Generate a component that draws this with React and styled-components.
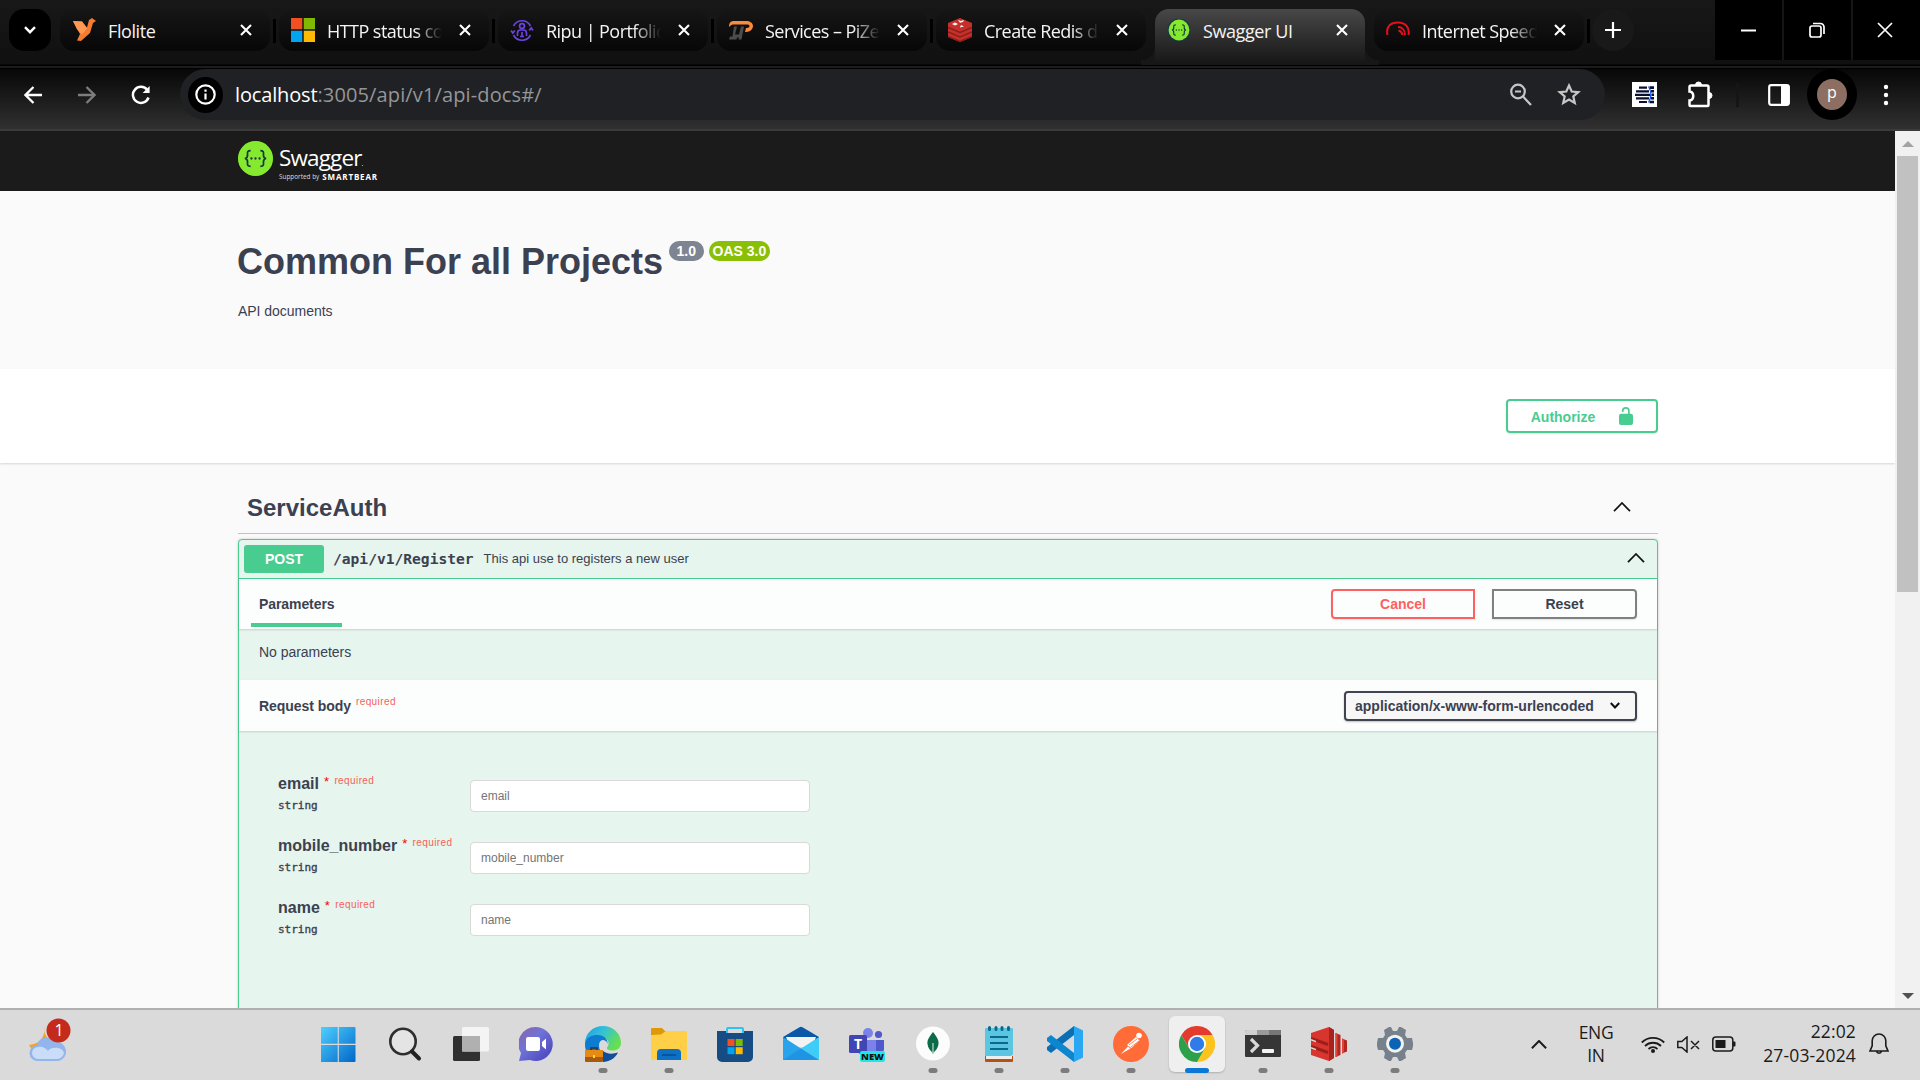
import React from "react";
import styled, { createGlobalStyle, css } from "styled-components";

const GlobalStyle = createGlobalStyle`
  *, *::before, *::after { box-sizing: border-box; }
  html, body { margin: 0; padding: 0; overflow: hidden; }
  body { font-family: "Liberation Sans", Arial, sans-serif; color: #3b4151; }
  svg { display: block; flex: none; }
`;

const UI = `"Open Sans", "Noto Sans", sans-serif`;
const MONO = `"DejaVu Sans Mono", monospace`;

const Screen = styled.div`
  width: 1920px;
  height: 1080px;
  display: flex;
  flex-direction: column;
  overflow: hidden;
  background: #fafafa;
`;

/* ---------- browser chrome ---------- */

const TabStrip = styled.div`
  height: 69px;
  flex: none;
  display: flex;
  align-items: flex-start;
  padding-left: 9px;
  background: linear-gradient(#181818, #101010 64px, #000 65px, #000 66px, #1c1c1c 66px, #1c1c1c 68px, #000 68px);
`;

const TabSearch = styled.button`
  width: 42px;
  height: 42px;
  margin: 9px 9px 0 0;
  padding: 0;
  border: 0;
  border-radius: 15px;
  background: #000;
  display: grid;
  place-items: center;
`;

const Tab = styled.div`
  position: relative;
  width: 210px;
  height: 42px;
  margin-top: 9px;
  padding: 0 18px 0 12px;
  border-radius: 14px;
  display: flex;
  align-items: center;
  color: #f4f4f4;
  background: linear-gradient(#161616, #070707);
  ${(p) =>
    p.$active &&
    css`
      height: 56px;
      padding: 0 17px 14px 12px;
      border-radius: 14px 14px 0 0;
      background: linear-gradient(#484848, #151515);
      &::before, &::after {
        content: "";
        position: absolute;
        bottom: 0;
        width: 14px;
        height: 19px;
      }
      &::before {
        left: -14px;
        background: radial-gradient(circle at 0 0, transparent 14px, #171717 14.5px);
      }
      &::after {
        right: -14px;
        background: radial-gradient(circle at 100% 0, transparent 14px, #171717 14.5px);
      }
    `}
`;

const TabTitle = styled.span`
  flex: 1;
  margin: 2px 17px 0 12px;
  overflow: hidden;
  white-space: nowrap;
  font: 18px/24px ${UI};
  letter-spacing: -0.4px;
  ${(p) => p.$fade && css`
    letter-spacing: -0.55px;
    mask-image: linear-gradient(90deg, #000 88px, transparent 115px);
  `}
`;

const TabDivider = styled.div`
  width: 3px;
  height: 24px;
  margin: 19px 3px 0;
  background: ${(p) => (p.$hidden ? "transparent" : "#000")};
`;

const NewTab = styled(TabSearch)`
  margin-left: -1px;
  margin-right: 0;
  border-radius: 50%;
  background: #191919;
`;

const WindowButtons = styled.div`
  margin-left: auto;
  display: flex;
  gap: 2px;
  background: #151515;
`;

const WindowButton = styled.div`
  width: 67px;
  height: 60px;
  padding-right: ${(p) => p.$shift || 0}px;
  background: #000;
  display: grid;
  place-items: center;
`;

const Toolbar = styled.div`
  height: 62px;
  flex: none;
  display: flex;
  align-items: flex-start;
  border-bottom: 2px solid #3b3b3b;
  background: linear-gradient(#070707, #303030);
`;

const ToolIcon = styled.div`
  width: ${(p) => p.$w}px;
  height: 51px;
  display: grid;
  place-items: center;
  flex: none;
`;

const Omnibox = styled.div`
  width: 1425px;
  height: 51px;
  border-radius: 26px;
  background: #202124;
  display: flex;
  align-items: center;
  padding: 0 24px 0 8px;
`;

const SiteInfo = styled.div`
  width: 35px;
  height: 36px;
  border-radius: 50%;
  background: #000;
  display: grid;
  place-items: center;
`;

const Url = styled.div`
  flex: 1;
  margin-left: 12px;
  padding-top: 1px;
  font: 20px/28px ${UI};
  letter-spacing: 0.13px;
  color: #949698;
  b { font-weight: 400; letter-spacing: -0.15px; color: #fff; }
`;

const OmniIcons = styled.div`
  display: flex;
  gap: 25px;
`;

const ToolDivider = styled.div`
  width: 3px;
  height: 24px;
  margin: 14px 24px 0 20px;
  background: #151515;
`;

const Avatar = styled.div`
  width: 50px;
  height: 51px;
  margin-left: 12px;
  border: 10px solid #000;
  border-radius: 50%;
  background: #8d6e63;
  color: #fff;
  text-align: center;
  font: 16px/27px ${UI};
`;

/* ---------- page ---------- */

const Viewport = styled.div`
  flex: 1;
  min-height: 0;
  display: flex;
`;

const Page = styled.main`
  width: 1895px;
  overflow: hidden;
`;

const Scrollbar = styled.div`
  width: 25px;
  padding: 10px 2px 9px;
  display: flex;
  flex-direction: column;
  align-items: center;
  background: #f1f1f1;
`;

const Thumb = styled.div`
  width: 21px;
  height: 436px;
  margin: 9px 0 auto;
  background: #c1c1c1;
`;

const Container = styled.div`
  width: 1420px;
  margin-left: 238px;
`;

const TopBar = styled.header`
  height: 60px;
  background: #1b1b1b;
`;

const Logo = styled(Container)`
  display: flex;
  padding-top: 10px;
  gap: 6px;
  color: #fff;
`;

const LogoText = styled.div`
  padding-top: 3px;
`;

const LogoName = styled.div`
  height: 27px;
  font: 22.5px/27px ${UI};
  letter-spacing: -0.85px;
  small { font-size: 7px; }
`;

const LogoBy = styled.div`
  height: 9px;
  margin-top: 1px;
  display: flex;
  align-items: center;
  gap: 3px;
  white-space: nowrap;
  font: 6.4px/9px ${UI};
  color: #ddd;
  b { font-size: 8px; line-height: 9px; letter-spacing: 0.85px; color: #fff; }
`;

const Info = styled(Container)`
  height: 178px;
  padding-top: 48px;
`;

const TitleRow = styled.div`
  height: 44px;
  display: flex;
  gap: 5px;
`;

const Title = styled.h1`
  margin: 1px 1px 0 -1px;
  font-size: 36px;
  line-height: 44px;
`;

const Badge = styled.span`
  height: 20px;
  margin-top: 2px;
  padding: 0 ${(p) => p.$pad}px;
  border-radius: 10px;
  background: ${(p) => p.$bg};
  color: #fff;
  font-size: 14px;
  font-weight: 700;
  line-height: 20px;
`;

const Text = styled.p`
  margin: ${(p) => p.$margin || 0};
  font-size: 14px;
  line-height: 20px;
  letter-spacing: -0.03px;
`;

const SchemeBar = styled.section`
  height: 94px;
  padding: 30px 237px 0 0;
  display: flex;
  justify-content: flex-end;
  background: #fff;
  box-shadow: 0 1px 2px rgba(0, 0, 0, 0.15);
`;

const Button = styled.button`
  width: ${(p) => p.$w}px;
  height: ${(p) => p.$h || 30}px;
  padding: ${(p) => p.$top || 0}px 0 0;
  border: 2px solid ${(p) => p.$line};
  border-radius: ${(p) => p.$radius || "4px"};
  background: transparent;
  color: ${(p) => p.$color || p.$line};
  box-shadow: 0 1px 2px rgba(0, 0, 0, 0.1);
  font: 700 14px/20px "Liberation Sans", Arial, sans-serif;
  display: flex;
  align-items: center;
  justify-content: center;
  gap: ${(p) => p.$gap || 0}px;
  svg { margin-top: -${(p) => p.$top || 0}px; }
`;

const TagHeader = styled(Container)`
  height: 71px;
  padding: 19px 27px 0 9px;
  display: flex;
  align-items: center;
  justify-content: space-between;
  border-bottom: 1px solid rgba(59, 65, 81, 0.3);
  h3 { margin: 0; font-size: 24px; line-height: 30px; }
  svg { margin-top: -2px; }
`;

const OpBlock = styled(Container)`
  height: 500px;
  margin-top: 5px;
  border: 1px solid #49cc90;
  border-radius: 4px;
  background: #e6f5ed;
  box-shadow: 0 0 3px rgba(0, 0, 0, 0.19);
`;

const OpSummary = styled.div`
  height: 39px;
  padding: 0 12px 0 5px;
  display: flex;
  align-items: center;
  border-bottom: 1px solid #49cc90;
  svg { margin-top: -2px; }
`;

const Method = styled.span`
  width: 80px;
  height: 28px;
  border-radius: 3px;
  background: #49cc90;
  color: #fff;
  font-size: 14px;
  font-weight: 700;
  line-height: 28px;
  text-align: center;
`;

const Path = styled.span`
  margin-left: 9px;
  font: 700 14.6px/24px ${MONO};
`;

const Description = styled.span`
  flex: 1;
  margin-left: 10px;
  font-size: 13px;
  line-height: 20px;
`;

const SectionHeader = styled.div`
  height: ${(p) => p.$h}px;
  padding: 0 20px 0 ${(p) => p.$left}px;
  display: flex;
  align-items: center;
  justify-content: space-between;
  background: #fbfefc;
  box-shadow: 0 1px 2px rgba(0, 0, 0, 0.15);
`;

const TabLabel = styled.h4`
  align-self: stretch;
  height: 48px;
  margin: 0;
  padding: 0 8px;
  border-bottom: 4px solid #49cc90;
  font-size: 14px;
  line-height: 51px;
  letter-spacing: -0.08px;
`;

const SectionLabel = styled.h4`
  display: flex;
  margin: 0;
  font-size: 14px;
  line-height: 20px;
  letter-spacing: -0.05px;
`;

const ButtonPair = styled.div`
  display: flex;
  gap: 17px;
`;

const NoParams = styled.div`
  height: 51px;
  padding: 13px 20px;
`;

const Required = styled.span`
  margin: ${(p) => p.$margin};
  color: #f75f5c;
  font: 400 10px/12px "Liberation Sans", Arial, sans-serif;
  letter-spacing: 0.4px;
`;

const Star = styled(Required)`
  color: #f00;
  font-size: 13px;
`;

const Select = styled.div`
  width: 293px;
  height: 30px;
  padding: 0 15px 0 9px;
  display: flex;
  align-items: center;
  justify-content: space-between;
  border: 2px solid #41444e;
  border-radius: 4px;
  background: #f7f7f7;
  box-shadow: 0 1px 2px rgba(0, 0, 0, 0.25);
  font-size: 14px;
  font-weight: 700;
`;

const Form = styled.div`
  display: flex;
  flex-direction: column;
  gap: 20px;
  padding: 42px 39px;
`;

const Field = styled.label`
  height: 42px;
  display: grid;
  grid-template-columns: 192px 340px;
`;

const FieldName = styled.div`
  display: flex;
  font-size: 16px;
  font-weight: 700;
  line-height: 22px;
`;

const FieldType = styled.div`
  font: 400 11px/14px ${MONO};
  -webkit-text-stroke: 0.35px #3b4151;
  margin-top: 4px;
`;

const Input = styled.input`
  width: 340px;
  height: 32px;
  margin-top: 7px;
  padding: 0 10px;
  border: 1px solid #d9d9d9;
  border-radius: 4px;
  background: #fff;
  font: 12px "Liberation Sans", Arial, sans-serif;
  &::placeholder { color: #757575; opacity: 1; }
`;

/* ---------- taskbar ---------- */

const Taskbar = styled.footer`
  height: 72px;
  flex: none;
  display: flex;
  border-top: 2px solid #b0b0b0;
  background: #dadada;
  color: #1b1b1b;
  font-family: ${UI};
`;

const Weather = styled.div`
  width: 306px;
  padding: 6px 0 0 28px;
`;

const Apps = styled.div`
  width: 1224px;
  display: flex;
`;

const AppTile = styled.div`
  position: relative;
  width: 56px;
  height: 56px;
  margin: 6px 5px 0;
  display: grid;
  place-items: center;
  border-radius: 6px;
  ${(p) => p.$active && css`background: #efefef; box-shadow: 0 1px 2px rgba(0, 0, 0, 0.2);`}
`;

const Indicator = styled.i`
  position: absolute;
  bottom: -1px;
  left: 50%;
  width: ${(p) => (p.$active ? 24 : 9)}px;
  height: 5px;
  border-radius: 3px;
  transform: translateX(-50%);
  background: ${(p) => (p.$active ? "#0a78d4" : "#7c7c7c")};
`;

const Tray = styled.div`
  flex: 1;
  height: 68px;
  padding-left: 1px;
  display: flex;
  align-items: center;
`;

const Lang = styled.div`
  width: 40px;
  margin: 0 25px 0 29px;
  text-align: center;
  font-size: 17.5px;
  line-height: 23px;
  letter-spacing: -0.3px;
`;

const Status = styled.div`
  display: flex;
  align-items: center;
  gap: 12px;
`;

const Clock = styled.div`
  width: 104px;
  margin: -3px 13px 0 16px;
  text-align: right;
  font-size: 17.5px;
  line-height: 24px;
  letter-spacing: 0.15px;
`;

/* ---------- icons ---------- */

const Stroke = ({ w, h, vb, d, color = "#fff", sw = 2, children, ...rest }) => (
  <svg width={w} height={h} viewBox={vb || `0 0 ${w} ${h}`} fill="none" stroke={color} strokeWidth={sw} {...rest}>
    {d && <path d={d} />}
    {children}
  </svg>
);

const CloseX = () => <Stroke w={12} h={12} sw={2.1} d="M1 1l10 10M11 1L1 11" />;
const ChevronUp = ({ w = 18, h = 10, sw = 1.7, color = "#111" }) => (
  <Stroke w={w} h={h} vb="0 0 18 10" sw={sw} color={color} d="M1 9.2L9 1l8 8.2" />
);

const Braces = ({ size, ring }) => (
  <svg width={size} height={size} viewBox="0 0 36 36">
    <circle cx="18" cy="18" r="18" fill={ring || "#85ea2d"} />
    <circle cx="18" cy="18" r={ring ? 16.3 : 17.6} fill="#85ea2d" />
    <path
      d="M13 10c-3 0-3.4 1-3.2 3.6.2 2.7-.2 4.2-2.8 4.4 2.6.2 3 1.7 2.8 4.4-.2 2.6.2 3.6 3.2 3.6M23 10c3 0 3.4 1 3.2 3.6-.2 2.7.2 4.2 2.8 4.4-2.6.2-3 1.7-2.8 4.4.2 2.6-.2 3.6-3.2 3.6"
      fill="none"
      stroke="#173647"
      strokeWidth="1.8"
    />
    <g fill="#173647">
      <circle cx="13.8" cy="18" r="1.2" />
      <circle cx="18" cy="18" r="1.2" />
      <circle cx="22.2" cy="18" r="1.2" />
    </g>
  </svg>
);

const Fav = ({ children }) => <svg width="24" height="24" viewBox="0 0 24 24">{children}</svg>;

const favicons = {
  flolite: (
    <Fav>
      <path d="M1 3l9 .5 5 6 2-7.500L20 0l4 3-3 2-3 10-9 8-4-.5 3-6.500L5 11z" fill="#f47b30" />
      <path d="M1 3l9 .5 5 7-5 6L5 11z" fill="#ff9a55" />
    </Fav>
  ),
  microsoft: (
    <Fav>
      <path fill="#f25022" d="M0 0h11.300v11.300H0z" />
      <path fill="#7fba00" d="M12.700 0H24v11.300H12.700z" />
      <path fill="#00a4ef" d="M0 12.700h11.300V24H0z" />
      <path fill="#ffb900" d="M12.700 12.700H24V24H12.700z" />
    </Fav>
  ),
  ripu: (
    <Fav>
      <g fill="none" stroke="#6a43e0" strokeWidth="1.7">
        <path d="M3.500 8A9.500 9.500 0 0 1 20.500 8M3.500 17a9.500 9.500 0 0 0 17 0M1 12.500l1.800 2.500 2-2.500M19.200 12.500l2-2.500 1.800 2.500" />
        <circle cx="12" cy="8" r="2.4" />
        <path d="M7.500 18v-3a3 3 0 0 1 3-3h3a3 3 0 0 1 3 3v3M12 14v5M10 18.500h4" />
      </g>
    </Fav>
  ),
  pizeon: (
    <Fav>
      <path d="M0 9c0-4 1.500-6 5-6h12c4 0 7 2 7 5s-3 6-7 6h-1l1-4c2.500.2 3.500-.8 3.500-2S19 6.500 17.500 6.500H5C3 6.500 2 7 0 9z" fill="#fb8b3c" />
      <path d="M5 8.500h3l-2 8h4l2-8h3l-2.500 13h-3l.4-2H8l-.5 2H0l1-3h2.500z" fill="#4c4c4c" />
    </Fav>
  ),
  redis: (
    <Fav>
      <path d="M0 5l12-5 12 5v14l-12 5-12-5z" fill="#c6302b" />
      <path d="M0 9.500l12 5 12-5M0 14l12 5 12-5M0 18.500l12 5 12-5" stroke="#8b1f1b" strokeWidth="1.5" fill="none" />
      <path d="M10 2l3 1 3-1-1 2-3 .8zM13 7l3 1.500-4 1zM4 6l3-1.500L10 6 7 7.500z" fill="#fff" />
    </Fav>
  ),
  swagger: (
    <Fav>
      <g transform="translate(.5 .5)">
        <Braces size={23} ring="#173647" />
      </g>
    </Fav>
  ),
  speed: (
    <Fav>
      <g fill="none" stroke="#e5101c" strokeWidth="2">
        <path d="M1.500 17C-.5 8 5 4.500 12 4.500S24 9 22.500 17" />
        <path d="M12 9c4 0 7 3 7 8M12.500 12.500c2 .5 3.500 2 4 4.500" />
      </g>
    </Fav>
  ),
};

const tabs = [
  { icon: "flolite", title: "Flolite" },
  { icon: "microsoft", title: "HTTP status co", fade: true },
  { icon: "ripu", title: "Ripu | Portfolio", fade: true },
  { icon: "pizeon", title: "Services – PiZe", fade: true },
  { icon: "redis", title: "Create Redis d", fade: true },
  { icon: "swagger", title: "Swagger UI", active: true },
  { icon: "speed", title: "Internet Speed", fade: true },
];

const Icon36 = ({ children }) => <svg width="36" height="36" viewBox="0 0 36 36">{children}</svg>;

const apps = [
  {
    id: "start",
    art: (
      <Icon36>
        <defs>
          <linearGradient id="win" x1="0" y1="0" x2="1" y2="1">
            <stop offset="0" stopColor="#4fd0ff" />
            <stop offset="1" stopColor="#0067c8" />
          </linearGradient>
        </defs>
        <path fill="url(#win)" d="M-1 2a1 1 0 0 1 1-1h16.200v16.700H-1zM17.300 1H33a1 1 0 0 1 1 1v15.700H17.300zM-1 18.900h17.200V36H0a1 1 0 0 1-1-1zM17.300 18.900H34V35a1 1 0 0 1-1 1H17.300z" transform="translate(.5 0)" />
      </Icon36>
    ),
  },
  {
    id: "search",
    art: (
      <Icon36>
        <circle cx="16" cy="15.500" r="12.700" fill="#e4e4e4" stroke="#2e2e2e" strokeWidth="2.6" />
        <path d="M25 25.500l7 7" stroke="#222" strokeWidth="4" strokeLinecap="round" />
      </Icon36>
    ),
  },
  {
    id: "taskview",
    art: (
      <Icon36>
        <rect x="0" y="10" width="27" height="25" rx="1.5" fill="#303030" />
        <rect x="9" y="1" width="27" height="24.5" rx="1.5" fill="#f4f4f4" />
        <rect x="9" y="10" width="18" height="15.5" fill="#b0b0b0" />
      </Icon36>
    ),
  },
  {
    id: "chat",
    art: (
      <Icon36>
        <defs>
          <linearGradient id="chat" x1="0" y1="0" x2=".8" y2=".8">
            <stop offset="0" stopColor="#8f63a6" />
            <stop offset=".5" stopColor="#6f74d6" />
            <stop offset="1" stopColor="#5450c4" />
          </linearGradient>
        </defs>
        <path d="M17 1a17 17 0 1 1-6 33L0 35l2-8A17 17 0 0 1 17 1z" fill="url(#chat)" />
        <rect x="7" y="11" width="14" height="14" rx="2" fill="#fff" />
        <path d="M23 16l4-3.500v11L23 20z" fill="#fff" />
      </Icon36>
    ),
  },
  {
    id: "edge",
    open: true,
    art: (
      <Icon36>
        <defs>
          <linearGradient id="edge" x1="0" y1="0" x2="1" y2=".5">
            <stop offset="0" stopColor="#1b9de2" />
            <stop offset=".5" stopColor="#35c1d8" />
            <stop offset="1" stopColor="#66e04f" />
          </linearGradient>
        </defs>
        <path d="M0 17a18 17 0 0 1 36 0c0 5-4 7.500-8 7.500s-8-1-5-4.500c2-4-1-8-5-8-7 0-13 6-18 5z" fill="url(#edge)" />
        <path d="M0 18C1 11 7 9 12 9c8 0 11 5 10.500 9-.5-3-3-4-4.500-4-4 0-5 6-3 10H1c-1-2-1-4-1-6z" fill="#0c7bd0" />
        <path d="M17 24c4 4 10 4.500 16 2.500-3 6-9 9.500-15 9.500z" fill="#114e9a" />
        <rect x="0" y="24" width="18" height="12" rx="1" fill="#a85a0c" />
        <path d="M0 25a1 1 0 0 1 1-1h16a1 1 0 0 1 1 1v6H0z" fill="#e58a12" />
        <path d="M6 24v-2h6v2" stroke="#333" strokeWidth="1.5" fill="none" />
        <rect x="8" y="29" width="2" height="3" fill="#ffd23c" />
      </Icon36>
    ),
  },
  {
    id: "explorer",
    open: true,
    art: (
      <Icon36>
        <path d="M0 3a1 1 0 0 1 1-1h10l4 4v6H0z" fill="#dd9a06" />
        <path d="M0 9l10-.5L15 5h20a1 1 0 0 1 1 1v28H0z" fill="#ffcf48" />
        <path d="M6 34v-7a4 4 0 0 1 4-4h16a4 4 0 0 1 4 4v7z" fill="#0d70c4" />
        <path d="M11 29h14" stroke="#0a4f94" strokeWidth="1.6" />
      </Icon36>
    ),
  },
  {
    id: "store",
    art: (
      <Icon36>
        <path d="M10 8V3a1 1 0 0 1 1-1h14a1 1 0 0 1 1 1v5" stroke="#30c0f5" strokeWidth="2" fill="none" />
        <path d="M0 5h9v2h18V5h9v26a5 5 0 0 1-5 5H5a5 5 0 0 1-5-5z" fill="#164b84" />
        <path fill="#f25022" d="M10.500 13h7v7h-7z" />
        <path fill="#7fba00" d="M18.700 13h7v7h-7z" />
        <path fill="#00a4ef" d="M10.500 21.200h7v7h-7z" />
        <path fill="#ffb900" d="M18.700 21.200h7v7h-7z" />
      </Icon36>
    ),
  },
  {
    id: "mail",
    art: (
      <Icon36>
        <path d="M0 11L16.500 1.200a3 3 0 0 1 3 0L36 11v10H0z" fill="#0a58a8" />
        <path d="M3 11h30l-4 10H7z" fill="#f3f3f3" />
        <path d="M0 11l36 23H0z" fill="#29a4ea" />
        <path d="M36 11L18 22.500 36 34z" fill="#3fcdf8" />
        <path d="M18 22.500L0 34h36z" fill="#1f93e4" />
      </Icon36>
    ),
  },
  {
    id: "teams",
    art: (
      <svg width="37" height="36" viewBox="0 0 37 36">
        <circle cx="19" cy="7" r="5" fill="#7b83eb" />
        <circle cx="29.500" cy="8.500" r="3.600" fill="#5059c9" />
        <path d="M24 14h11v10a8 8 0 0 1-8 4z" fill="#5059c9" />
        <path d="M10 14h17v14H10z" fill="#7b83eb" />
        <rect x="0" y="9" width="18" height="18" rx="1.5" fill="#4146b4" />
        <text x="9" y="23" textAnchor="middle" fontFamily="Open Sans, sans-serif" fontWeight="700" fontSize="14" fill="#fff">T</text>
        <rect x="11" y="25" width="25" height="11" rx="2" fill="#21e6e6" />
        <text x="23.500" y="34" textAnchor="middle" fontFamily="Open Sans, sans-serif" fontWeight="800" fontSize="9.500" fill="#111">NEW</text>
      </svg>
    ),
  },
  {
    id: "mongo",
    open: true,
    art: (
      <Icon36>
        <circle cx="18" cy="17.500" r="17" fill="#fcfcfc" />
        <path d="M18 6c4 5 6 8 5.500 12-.3 4-3 7-5.500 9-2.500-2-5.200-5-5.500-9C12 14 14 11 18 6z" fill="#0d6b4a" />
        <path d="M18 17v11" stroke="#a9cdb9" strokeWidth="1.4" />
      </Icon36>
    ),
  },
  {
    id: "notepad",
    open: true,
    art: (
      <Icon36>
        <path d="M4 30h28v5a1 1 0 0 1-1 1H5a1 1 0 0 1-1-1z" fill="#b4530f" />
        <rect x="5" y="29" width="26" height="4" fill="#eee" />
        <path d="M4 3a1 1 0 0 1 1-1h26a1 1 0 0 1 1 1v24a3 3 0 0 1-3 3H4z" fill="#5cc6e2" />
        <path d="M8.500 1.500v2M15 1.500v2M21 1.500v2M27.500 1.500v2" stroke="#0a6a8c" strokeWidth="3" strokeLinecap="round" />
        <path d="M9 11h18M9 17h18M9 23h18" stroke="#0a6a8c" strokeWidth="1.8" />
      </Icon36>
    ),
  },
  {
    id: "vscode",
    open: true,
    art: (
      <Icon36>
        <path d="M0 24l4 3L27 9V0L0 21z" fill="#0a6fb5" />
        <path d="M0 12l4-3 23 18v9L0 15z" fill="#0d86d0" />
        <path d="M27 0l9 4.500v27L27 36z" fill="#2aa7f2" />
      </Icon36>
    ),
  },
  {
    id: "postman",
    open: true,
    art: (
      <Icon36>
        <circle cx="18" cy="18" r="18" fill="#ff6c37" />
        <circle cx="26" cy="9.500" r="2.800" fill="#fff" />
        <path d="M14 19l9-8 3.500 3.500-8 7.500zM15 20.500l2.500 2L8 28z" fill="#fff" />
        <path d="M16 19l8-6M18 21l8-6" stroke="#ff6c37" strokeWidth=".8" />
      </Icon36>
    ),
  },
  {
    id: "chrome",
    open: true,
    active: true,
    art: (
      <Icon36>
        <path d="M2.400 9A18 18 0 0 1 33.600 9H18v9l-7.800 4.500z" fill="#e33b2e" />
        <path d="M33.600 9A18 18 0 0 1 18 36l7.800-13.500L18 18V9z" fill="#fcc31e" />
        <path d="M18 36A18 18 0 0 1 2.400 9l7.800 13.500L18 18l7.800 4.500z" fill="#2da04c" />
        <circle cx="18" cy="18" r="9" fill="#fff" />
        <circle cx="18" cy="18" r="7.200" fill="#2f7bea" />
      </Icon36>
    ),
  },
  {
    id: "terminal",
    open: true,
    art: (
      <Icon36>
        <path d="M0 5a1 1 0 0 1 1-1h34a1 1 0 0 1 1 1v25a1 1 0 0 1-1 1H1a1 1 0 0 1-1-1z" fill="#363636" />
        <path d="M0 5a1 1 0 0 1 1-1h11v5H0z" fill="#cfcfcf" />
        <path d="M12 4h12v5H12z" fill="#9a9a9a" />
        <path d="M24 4h11a1 1 0 0 1 1 1v4H24z" fill="#777" />
        <path d="M6 13l6.500 6.500L6 26" stroke="#d8d8d8" strokeWidth="3.2" fill="none" />
        <rect x="17" y="23" width="12" height="4" rx="1" fill="#f2f2f2" />
      </Icon36>
    ),
  },
  {
    id: "redis",
    open: true,
    art: (
      <Icon36>
        <path d="M0 7l18-6 5 3v28l-5 3L0 29z" fill="#d8352e" />
        <path d="M18 1l5 3v28l-5 3z" fill="#a8231d" />
        <path d="M0 12.500l17 6M0 20.500l17 6" stroke="#9c1f1a" strokeWidth="3" />
        <path d="M0 13.800l5 1.800M0 21.800l5 1.800" stroke="#dadada" strokeWidth="1.5" />
        <path d="M24.500 7l5 2v20l-5 2zM31 12.500l5 2v11l-5 2z" fill="#b3261f" />
        <path d="M24.500 7l2 1v22.500l-2 .5zM31 12.500l2 1v13l-2 1z" fill="#e0443b" />
      </Icon36>
    ),
  },
  {
    id: "settings",
    open: true,
    art: (
      <Icon36>
        <path
          d="M13 1h-1L7 4l1 5-2 3H1l-1 5v3l1 4h5l2 3-1 5 5 3h2l2-4h4l2 4h2l5-3-1-5 2-3h5l1-4v-3l-1-5h-5l-2-3 1-5-5-3h-2l-2 4h-4l-2-4z"
          fill="#77818b"
        />
        <circle cx="18" cy="17.700" r="9" fill="#f2f2f2" />
        <circle cx="18" cy="17.700" r="6" fill="#0c63b5" />
      </Icon36>
    ),
  },
];

const fields = ["email", "mobile_number", "name"];

/* ---------- sections ---------- */

const BrowserTabs = () => (
  <TabStrip>
    <TabSearch>
      <Stroke w={12} h={8} sw={2.4} d="M1 1.200l5 5 5-5" />
    </TabSearch>
    {tabs.map((t, i) => (
      <React.Fragment key={t.title}>
        <Tab $active={t.active}>
          {favicons[t.icon]}
          <TabTitle $fade={t.fade}>{t.title}</TabTitle>
          <CloseX />
        </Tab>
        <TabDivider $hidden={i === 4 || i === 5} />
      </React.Fragment>
    ))}
    <NewTab>
      <Stroke w={16} h={16} sw={2.2} d="M8 0v16M0 8h16" />
    </NewTab>
    <WindowButtons>
      <WindowButton><Stroke w={15} h={3} sw={2} d="M0 1.500h15" /></WindowButton>
      <WindowButton $shift={2}>
        <Stroke w={16} h={16} sw={1.7}>
          <rect x="1" y="4" width="11" height="11" rx="2" />
          <path d="M4 1.500h7.500a3.500 3.500 0 0 1 3.500 3.500v7" />
        </Stroke>
      </WindowButton>
      <WindowButton $shift={3}><Stroke w={16} h={16} sw={1.7} d="M1 1l14 14M15 1L1 15" /></WindowButton>
    </WindowButtons>
  </TabStrip>
);

const BrowserToolbar = () => (
  <Toolbar>
    <ToolIcon $w={66}><Stroke w={18} h={18} sw={2.3} d="M18 9H1.500M9.500 1L1.500 9l8 8" /></ToolIcon>
    <ToolIcon $w={42}><Stroke w={18} h={18} sw={2.3} color="#7d7d7d" d="M0 9h16.500M8.500 1l8 8-8 8" /></ToolIcon>
    <ToolIcon $w={66}>
      <Stroke w={20} h={20} sw={2.5}>
        <path d="M17.500 12.500A8 8 0 1 1 16.300 5" />
        <path d="M18.600 1v7h-7z" fill="#fff" stroke="none" />
      </Stroke>
    </ToolIcon>
    <ToolIcon $w={6} />
    <Omnibox>
      <SiteInfo>
        <Stroke w={21} h={21} sw={2.2}>
          <circle cx="10.500" cy="10.500" r="9.200" />
          <path d="M10.500 9.500v6M10.500 5.500v2.200" />
        </Stroke>
      </SiteInfo>
      <Url><b>localhost</b>:3005/api/v1/api-docs#/</Url>
      <OmniIcons>
        <Stroke w={22} h={23} sw={2.2} color="#c6c6c6">
          <circle cx="8" cy="8.500" r="6.800" />
          <path d="M13 13.500l8 8.500M5 8.500h6" />
        </Stroke>
        <Stroke w={24} h={23} vb="0 0 24 23" sw={2.2} color="#c6c6c6" d="M12 2.500l2.700 6 6.600.6-5 4.400 1.500 6.500L12 16.600 6.200 20l1.500-6.500-5-4.400 6.600-.6z" />
      </OmniIcons>
    </Omnibox>
    <ToolIcon $w={79}>
      <svg width="25" height="25" viewBox="0 0 25 25">
        <rect width="25" height="25" fill="#fff" />
        <path d="M7 5.600h8M4 9.300h13M3 12.800h15M4 16.300h13M7 20h8" stroke="#0b1030" strokeWidth="2.2" />
        <path d="M17.500 5.600H22M19 9.300h3M19.500 12.800H22M19 16.300h3M17.500 20H22" stroke="#0b1030" strokeWidth="2.6" />
        <path d="M16.500 4.500c3 5 3 11 0 16" stroke="#1652f0" strokeWidth="1.2" fill="none" />
      </svg>
    </ToolIcon>
    <ToolIcon $w={32}>
      <Stroke w={26} h={27} sw={2.5}>
        <path d="M4 4.500h16a1.500 1.500 0 0 1 1.500 1.500v18a1 1 0 0 1-1 1H3.500a1 1 0 0 1-1-1v-4.500c5-.5 5-8.500 0-9V6A1.500 1.500 0 0 1 4 4.500z" />
        <path d="M8.500 4a3 3 0 0 1 6 0zM22 11.500a3 3 0 0 1 0 6z" fill="#fff" stroke="#fff" strokeWidth="1" />
      </Stroke>
    </ToolIcon>
    <ToolDivider />
    <ToolIcon $w={32}>
      <Stroke w={22} h={22} sw={2.2}>
        <rect x="1.200" y="1.200" width="19.600" height="19.600" rx="2" />
        <path d="M13 1h6.500a2 2 0 0 1 2 2v16a2 2 0 0 1-2 2H13z" fill="#fff" stroke="none" />
      </Stroke>
    </ToolIcon>
    <Avatar>p</Avatar>
    <ToolIcon $w={58}>
      <svg width="6" height="22" viewBox="0 0 6 22" fill="#fff">
        <circle cx="3" cy="3" r="2.200" />
        <circle cx="3" cy="11" r="2.200" />
        <circle cx="3" cy="19" r="2.200" />
      </svg>
    </ToolIcon>
  </Toolbar>
);

const Operation = () => (
  <OpBlock>
    <OpSummary>
      <Method>POST</Method>
      <Path>/api/v1/Register</Path>
      <Description>This api use to registers a new user</Description>
      <ChevronUp />
    </OpSummary>
    <SectionHeader $h={50} $left={12}>
      <TabLabel>Parameters</TabLabel>
      <ButtonPair>
        <Button $w={144} $line="#ff6060" $radius="4px 0 0 4px">Cancel</Button>
        <Button $w={145} $line="#808080" $color="#3b4151" $radius="0 4px 4px 0">Reset</Button>
      </ButtonPair>
    </SectionHeader>
    <NoParams><Text>No parameters</Text></NoParams>
    <SectionHeader $h={51} $left={20}>
      <SectionLabel>
        Request body<Required $margin="0 0 0 5px">required</Required>
      </SectionLabel>
      <Select>
        application/x-www-form-urlencoded
        <Stroke w={10} h={7} sw={2} color="#111" d="M.8 1L5 5.500 9.200 1" />
      </Select>
    </SectionHeader>
    <Form>
      {fields.map((f) => (
        <Field key={f}>
          <div>
            <FieldName>
              {f}
              <Star $margin="3px 0 0 5px">*</Star>
              <Required $margin="2px 0 0 5px">required</Required>
            </FieldName>
            <FieldType>string</FieldType>
          </div>
          <Input placeholder={f} />
        </Field>
      ))}
    </Form>
  </OpBlock>
);

const DesktopBar = () => (
  <Taskbar>
    <Weather>
      <svg width="46" height="48" viewBox="0 0 46 48">
        <path d="M16 10c2 9-3 18-15 19 2 4 4 5 7 6l13-12c-4-3-5-8-5-13z" fill="#f3a02b" />
        <path d="M10 45a8 8 0 0 1-1-16 10 10 0 0 1 18-3 9 9 0 0 1 3 19z" fill="#94b4ec" />
        <path d="M10 43a6 6 0 0 1 0-12c4-1 8 1 10 4 3-5 15-4 16 2-1 4-4 6-8 6z" fill="#c9dcf8" />
        <circle cx="30.500" cy="14.500" r="12" fill="#c42b1c" />
        <text x="31" y="20" textAnchor="middle" fontFamily="Open Sans, sans-serif" fontSize="16" fill="#fff">1</text>
      </svg>
    </Weather>
    <Apps>
      {apps.map((a) => (
        <AppTile key={a.id} $active={a.active}>
          {a.art}
          {a.open && <Indicator $active={a.active} />}
        </AppTile>
      ))}
    </Apps>
    <Tray>
      <Status>
        <ChevronUp w={16} h={9} sw={2.2} color="#1b1b1b" />
      </Status>
      <Lang>ENG<br />IN</Lang>
      <Status>
        <Stroke w={24} h={17} sw={1.8} color="#1b1b1b">
          <path d="M.8 6.500a16 16 0 0 1 22.400 0M4 10a11.500 11.500 0 0 1 16 0M7.500 13a6.500 6.500 0 0 1 9 0" />
          <circle cx="12" cy="15" r="2" fill="#1b1b1b" stroke="none" />
        </Stroke>
        <Stroke w={23} h={17} sw={1.5} color="#1b1b1b" d="M.8 5.500h4L10 1v15l-5.200-4.500h-4zM14 5l8 8M22 5l-8 8" />
        <Stroke w={24} h={16} sw={1.5} color="#1b1b1b">
          <rect x=".8" y="1" width="20" height="14" rx="3" />
          <rect x="3.500" y="4" width="10" height="8" fill="#1b1b1b" stroke="none" />
          <path d="M21 5.500h1.500a1 1 0 0 1 1 1v3a1 1 0 0 1-1 1H21z" fill="#1b1b1b" stroke="none" />
        </Stroke>
      </Status>
      <Clock>22:02<br />27-03-2024</Clock>
      <Stroke w={20} h={22} sw={1.6} color="#1b1b1b" d="M10 1a6.800 6.800 0 0 0-6.800 6.800v5L1 18h18l-2.200-5.200v-5A6.800 6.800 0 0 0 10 1zM7.500 18.300a2.600 2.600 0 0 0 5 0" />
    </Tray>
  </Taskbar>
);

export default function App() {
  return (
    <Screen>
      <GlobalStyle />
      <BrowserTabs />
      <BrowserToolbar />
      <Viewport>
        <Page>
          <TopBar>
            <Logo>
              <Braces size={35} />
              <LogoText>
                <LogoName>Swagger<small>.</small></LogoName>
                <LogoBy>Supported by <b>SMARTBEAR</b></LogoBy>
              </LogoText>
            </Logo>
          </TopBar>
          <Info>
            <TitleRow>
              <Title>Common For all Projects</Title>
              <Badge $bg="#7d8492" $pad={7.5}>1.0</Badge>
              <Badge $bg="#89bf04" $pad={4}>OAS 3.0</Badge>
            </TitleRow>
            <Text $margin="18px 0 0">API documents</Text>
          </Info>
          <SchemeBar>
            <Button $w={152} $h={34} $line="#49cc90" $gap={24} $top={2}>
              Authorize
              <svg width="14" height="18" viewBox="0 0 14 18">
                <path d="M3.700 5V4a3.100 3.100 0 0 1 6.200 0v4" fill="none" stroke="#49cc90" strokeWidth="1.7" />
                <rect x="0" y="6.800" width="14" height="11.200" rx="2" fill="#49cc90" />
              </svg>
            </Button>
          </SchemeBar>
          <TagHeader>
            <h3>ServiceAuth</h3>
            <ChevronUp />
          </TagHeader>
          <Operation />
        </Page>
        <Scrollbar>
          <svg width="12" height="6" viewBox="0 0 12 6"><path d="M0 6l6-6 6 6z" fill="#a3a3a3" /></svg>
          <Thumb />
          <svg width="12" height="6" viewBox="0 0 12 6"><path d="M0 0h12L6 6z" fill="#505050" /></svg>
        </Scrollbar>
      </Viewport>
      <DesktopBar />
    </Screen>
  );
}
